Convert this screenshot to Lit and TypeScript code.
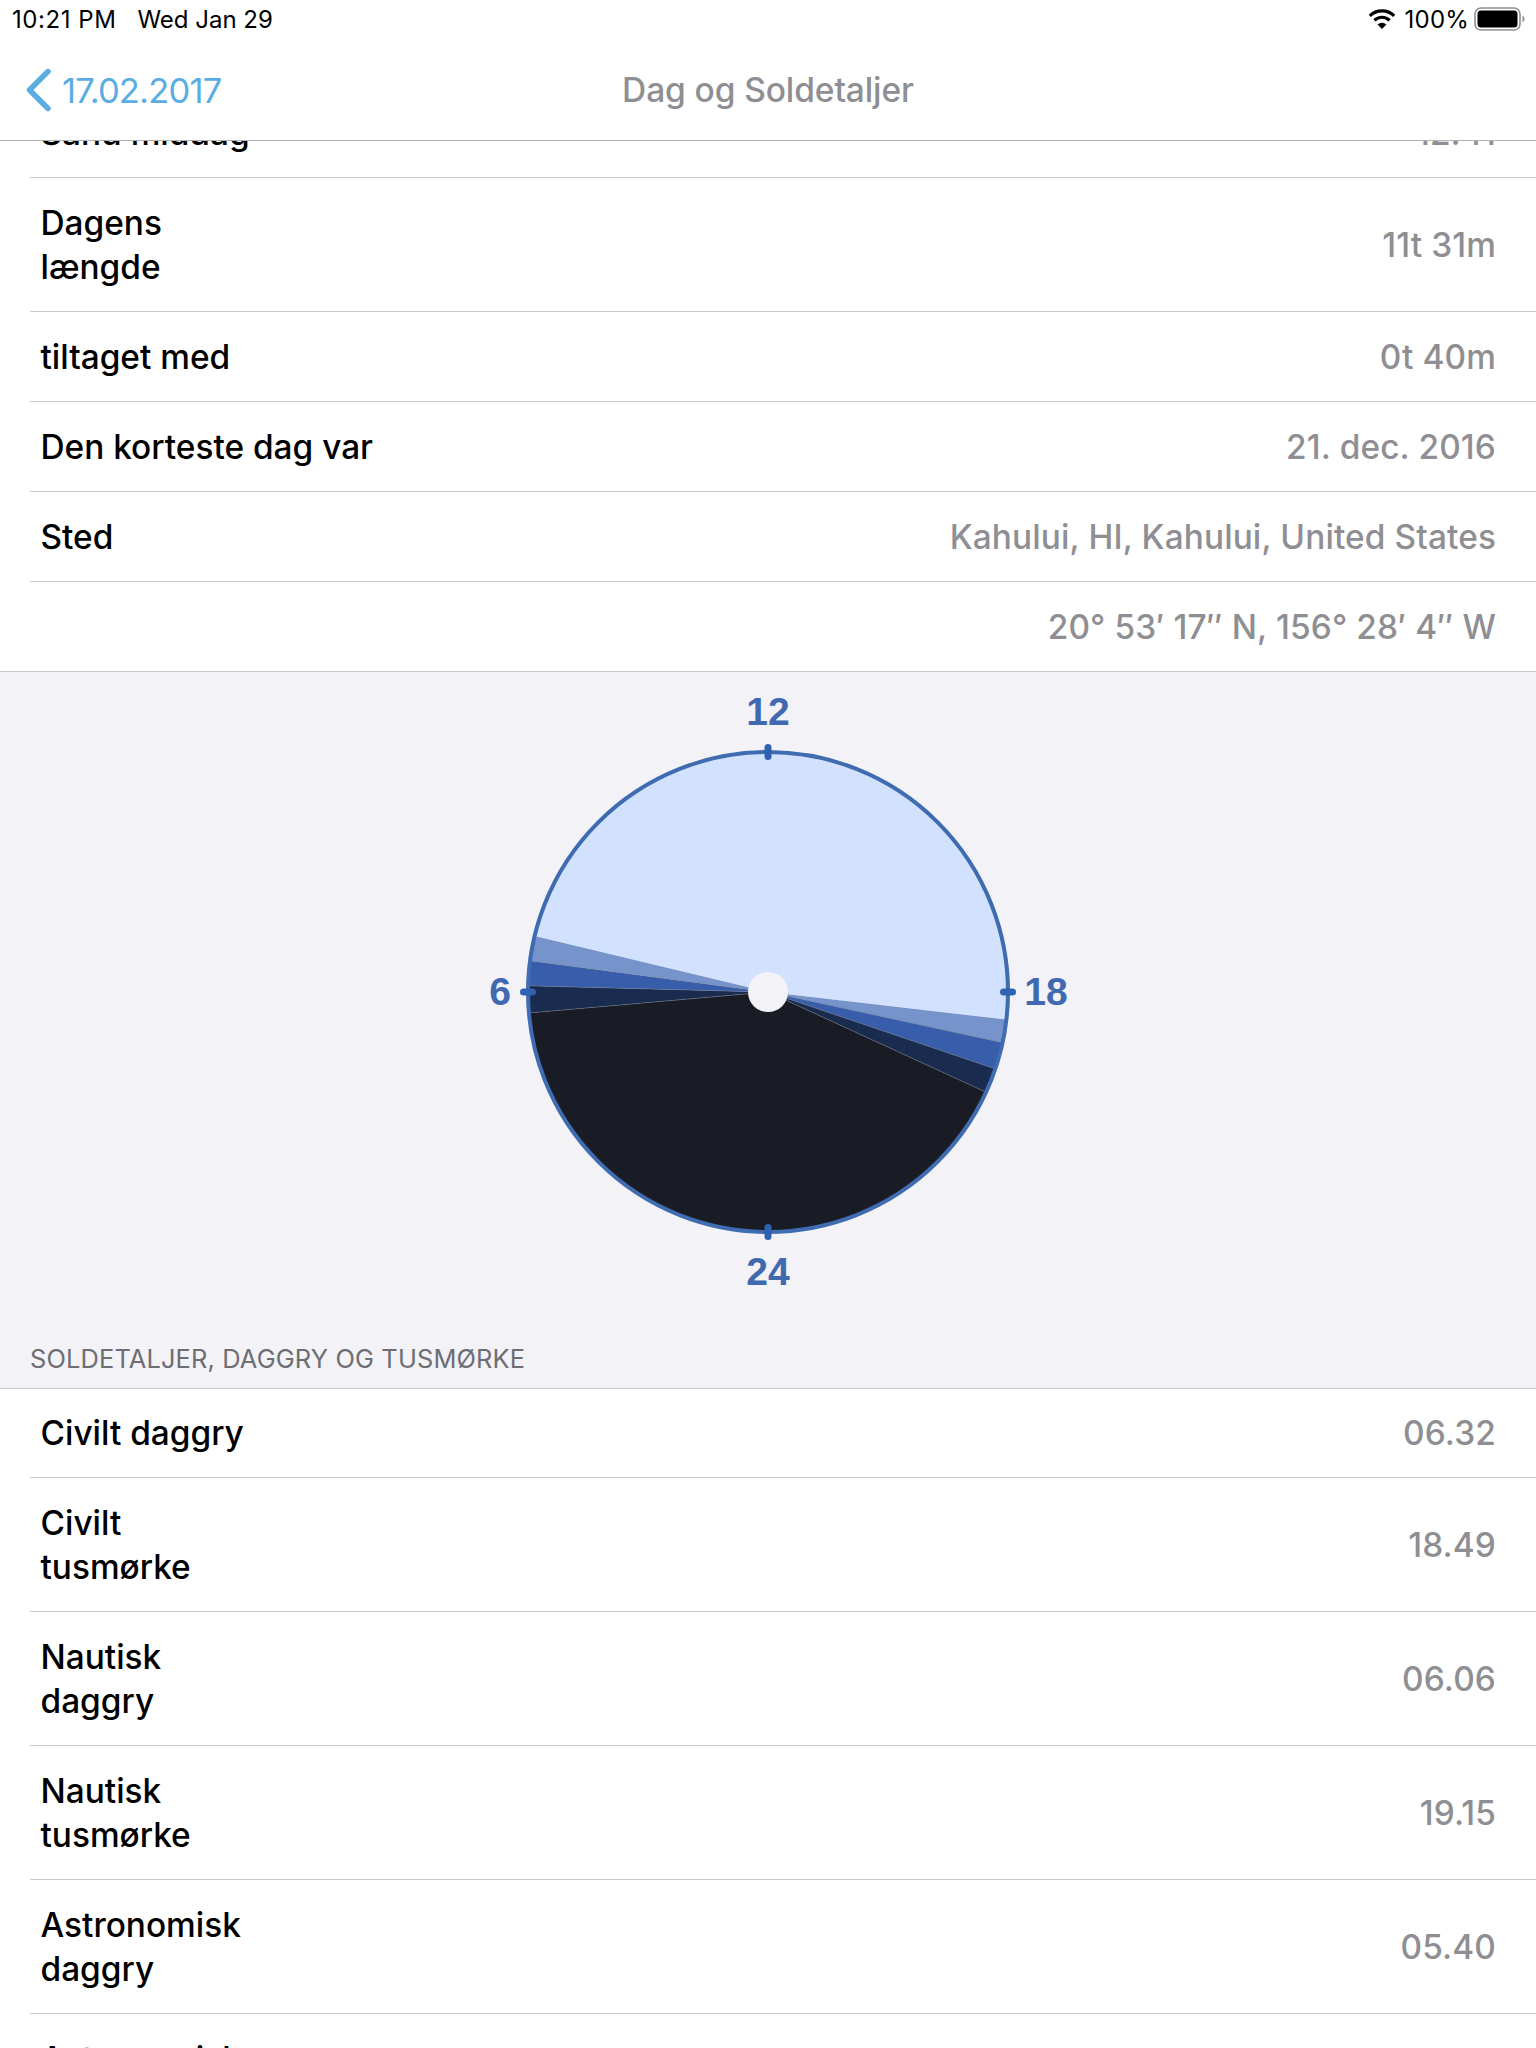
import { LitElement, html, css, svg } from "lit";
import { customElement } from "lit/decorators.js";

type Row = { label: string[]; value: string };

const topRows: Row[] = [
  { label: ["Sand middag"], value: "12.41" },
  { label: ["Dagens", "længde"], value: "11t 31m" },
  { label: ["tiltaget med"], value: "0t 40m" },
  { label: ["Den korteste dag var"], value: "21. dec. 2016" },
  { label: ["Sted"], value: "Kahului, HI, Kahului, United States" },
  { label: [""], value: "20° 53′ 17″ N, 156° 28′ 4″ W" },
];

const bottomRows: Row[] = [
  { label: ["Civilt daggry"], value: "06.32" },
  { label: ["Civilt", "tusmørke"], value: "18.49" },
  { label: ["Nautisk", "daggry"], value: "06.06" },
  { label: ["Nautisk", "tusmørke"], value: "19.15" },
  { label: ["Astronomisk", "daggry"], value: "05.40" },
  { label: ["Astronomisk", "tusmørke"], value: "19.41" },
];

const CX = 300;
const CY = 320;
const R = 240;

const wedges: [number, number, string][] = [
  [13.5, 186.6, "#d2e2fe"],
  [186.6, 192.2, "#7793cc"],
  [192.2, 198.7, "#385dab"],
  [198.7, 204.7, "#1a2b50"],
  [204.7, 355, "#191c24"],
  [355, 361.5, "#1a2b50"],
  [1.5, 7.5, "#385dab"],
  [7.5, 13.5, "#7793cc"],
];

function pt(a: number) {
  const t = (a * Math.PI) / 180;
  return `${(CX - R * Math.cos(t)).toFixed(2)} ${(CY - R * Math.sin(t)).toFixed(2)}`;
}

function wedgePath(a: number, b: number) {
  const large = b - a > 180 ? 1 : 0;
  return `M${CX} ${CY} L${pt(a)} A${R} ${R} 0 ${large} 1 ${pt(b)} Z`;
}

@customElement("app-root")
export class AppRoot extends LitElement {
  static styles = css`
    :host {
      display: block;
      width: 1536px;
      height: 2048px;
      overflow: hidden;
      background: #fff;
      font-family: Inter, "Liberation Sans", sans-serif;
      color: #000;
    }
    .top {
      position: relative;
      z-index: 1;
      background: #fff;
      border-bottom: 1px solid #b2b2b2;
      height: 140px;
    }
    .status {
      height: 40px;
      display: flex;
      justify-content: space-between;
      align-items: center;
      padding: 0 11px 2px 12px;
      box-sizing: border-box;
      font-size: 24px;
    }
    .status-left {
      display: flex;
      gap: 21px;
    }
    .time {
      letter-spacing: 0.55px;
    }
    .status-right {
      display: flex;
      align-items: center;
      letter-spacing: 0.2px;
    }
    .wifi {
      display: block;
      width: 28px;
      height: 20px;
      margin-right: 9px;
    }
    .battery {
      display: block;
      width: 51px;
      height: 24px;
      margin-left: 5px;
    }
    .nav {
      height: 100px;
      display: grid;
      grid-template-columns: 1fr auto 1fr;
      align-items: center;
      box-sizing: border-box;
    }
    .back {
      display: flex;
      align-items: center;
      gap: 10px;
      padding-left: 24px;
      color: #5aade3;
      font-size: 34.5px;
      letter-spacing: -0.8px;
    }
    .back svg {
      display: block;
      width: 28px;
      height: 44px;
    }
    .title {
      color: #8e8e93;
      font-size: 33.5px;
      font-weight: 500;
      letter-spacing: -0.1px;
    }
    .content {
      margin-top: -53px;
    }
    .group {
      background: #fff;
    }
    .group.lined {
      box-shadow: inset 0 1px 0 #c8c7cc;
    }
    .row {
      margin-left: 30px;
      padding: 23px 40px 22px 10.5px;
      min-height: 90px;
      box-sizing: border-box;
      border-bottom: 1px solid #c8c7cc;
      display: flex;
      justify-content: space-between;
      align-items: center;
      font-size: 33.4px;
      font-weight: 500;
      line-height: 44px;
    }
    .label span {
      display: block;
    }
    .value {
      color: #8e8e93;
      white-space: nowrap;
      letter-spacing: 0.12px;
    }
    .section {
      height: 717px;
      box-sizing: border-box;
      background: #f2f2f7;
      border-top: 1px solid #c8c7cc;
      margin-top: -1px;
    }
    .clock {
      display: block;
      width: 600px;
      height: 638px;
      margin: 0 auto;
    }
    .clock text {
      font-family: "Liberation Sans", Arial, sans-serif;
      font-weight: 700;
      font-size: 39px;
      fill: #4069b0;
      text-anchor: middle;
    }
    .head {
      padding: 34px 0 0 30px;
      font-size: 25.4px;
      line-height: 30px;
      color: #6d6d72;
      letter-spacing: 0.15px;
    }
  `;

  private rows(rows: Row[]) {
    return rows.map(
      (r) => html`<div class="row">
        <div class="label">${r.label.map((l) => html`<span>${l}</span>`)}</div>
        <div class="value">${r.value}</div>
      </div>`
    );
  }

  private clock() {
    return html`<svg class="clock" viewBox="0 0 600 638">
      ${wedges.map(
        ([a, b, c]) =>
          svg`<path d=${wedgePath(a, b)} fill=${c} stroke="#7c8598" stroke-width="0.35"></path>`
      )}
      <path d=${wedgePath(13.5, 186.6)} fill="#d2e2fe"></path>
      <circle cx=${CX} cy=${CY} r=${R} fill="none" stroke="#3f6bb0" stroke-width="4"></circle>
      <g stroke="#2f62b0" stroke-width="7" stroke-linecap="round">
        <line x1=${CX} y1=${CY - R - 4.5} x2=${CX} y2=${CY - R + 4.5}></line>
        <line x1=${CX} y1=${CY + R - 4.5} x2=${CX} y2=${CY + R + 4.5}></line>
        <line x1=${CX - R - 4.5} y1=${CY} x2=${CX - R + 4.5} y2=${CY}></line>
        <line x1=${CX + R - 4.5} y1=${CY} x2=${CX + R + 4.5} y2=${CY}></line>
      </g>
      <circle cx=${CX} cy=${CY} r="20" fill="#f2f2f7"></circle>
      <text x=${CX} y="53">12</text>
      <text x=${CX} y="613">24</text>
      <text x="32" y=${CY + 13}>6</text>
      <text x="578" y=${CY + 13}>18</text>
    </svg>`;
  }

  render() {
    return html`
      <div class="top">
        <div class="status">
          <div class="status-left"><span class="time">10:21 PM</span><span>Wed Jan 29</span></div>
          <div class="status-right">
            <svg class="wifi" viewBox="0 0 28 20">
              <path d="M1.8 6.8A17.5 17.5 0 0 1 26.2 6.8" fill="none" stroke="#000" stroke-width="3.2"></path>
              <path d="M6.4 11.4A10.8 10.8 0 0 1 21.6 11.4" fill="none" stroke="#000" stroke-width="3.2"></path>
              <path d="M14 20L9.6 15.5A6.2 6.2 0 0 1 18.4 15.5Z" fill="#000"></path>
            </svg>
            <span>100%</span>
            <svg class="battery" viewBox="0 0 51 24">
              <rect x="1" y="1" width="45" height="22" rx="6" fill="none" stroke="#8e8e93" stroke-width="1.6"></rect>
              <rect x="3.5" y="3.5" width="40" height="17" rx="3.5" fill="#000"></rect>
              <path d="M48.5 8.5A4 4 0 0 1 48.5 15.5Z" fill="#8e8e93"></path>
            </svg>
          </div>
        </div>
        <div class="nav">
          <div class="back">
            <svg viewBox="0 0 28 44">
              <path d="M24 3.5L5.5 22L24 40.5" fill="none" stroke="#5aade3" stroke-width="5.4" stroke-linecap="round" stroke-linejoin="round"></path>
            </svg>
            <span>17.02.2017</span>
          </div>
          <div class="title">Dag og Soldetaljer</div>
          <div></div>
        </div>
      </div>
      <div class="content">
        <div class="group">${this.rows(topRows)}</div>
        <div class="section">
          ${this.clock()}
          <div class="head">SOLDETALJER, DAGGRY OG TUSMØRKE</div>
        </div>
        <div class="group lined">${this.rows(bottomRows)}</div>
      </div>
    `;
  }
}
